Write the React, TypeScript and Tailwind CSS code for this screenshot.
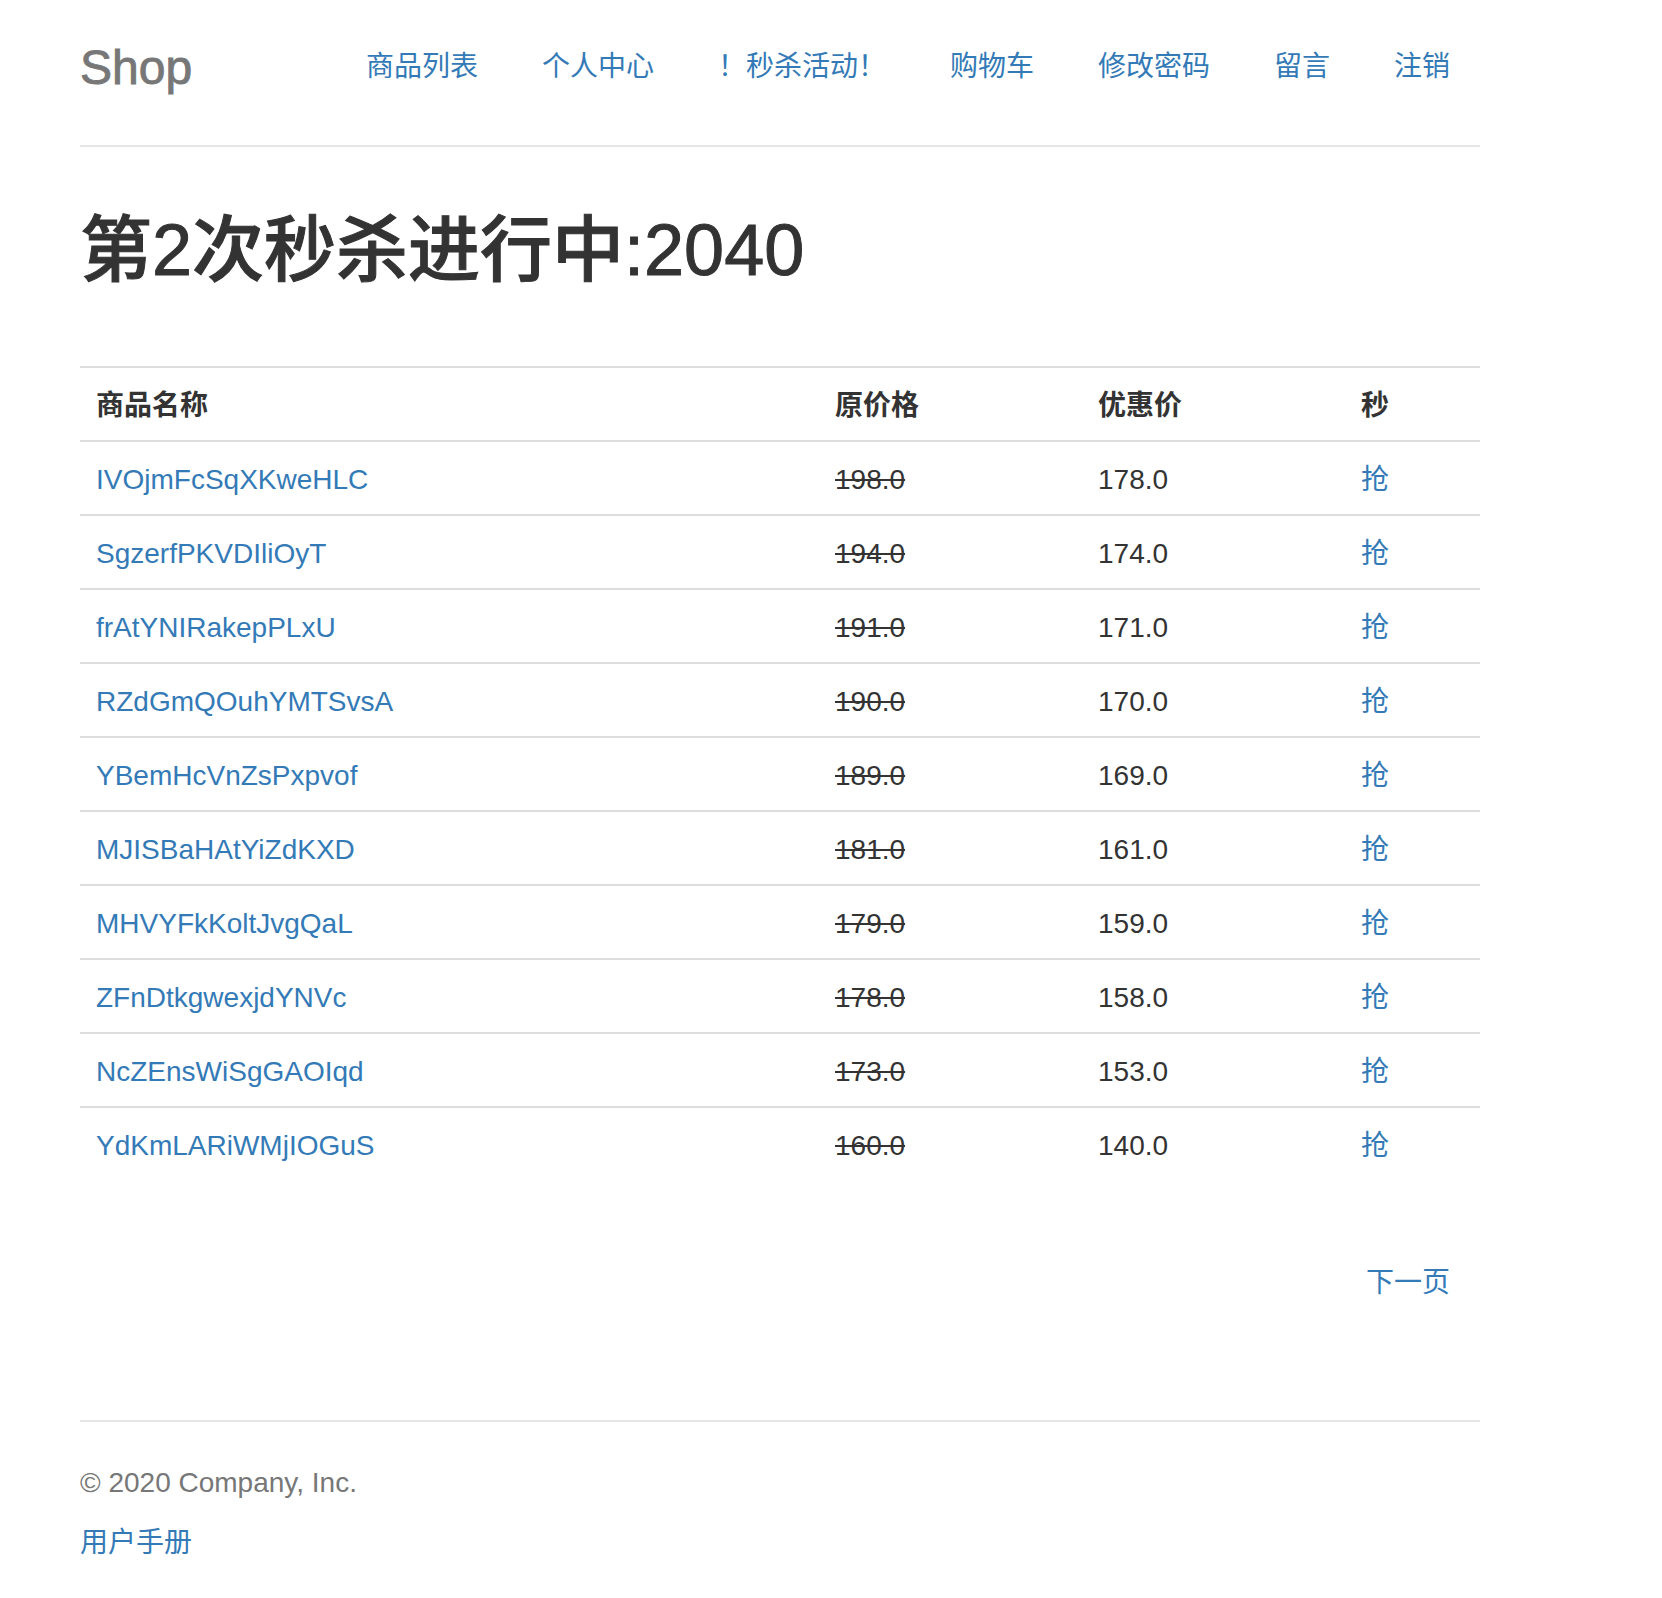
import React from "react";

const nav = ["商品列表", "个人中心", "！秒杀活动！", "购物车", "修改密码", "留言", "注销"];

const rows: [string, string, string][] = [
  ["IVOjmFcSqXKweHLC", "198.0", "178.0"],
  ["SgzerfPKVDIliOyT", "194.0", "174.0"],
  ["frAtYNIRakepPLxU", "191.0", "171.0"],
  ["RZdGmQOuhYMTSvsA", "190.0", "170.0"],
  ["YBemHcVnZsPxpvof", "189.0", "169.0"],
  ["MJISBaHAtYiZdKXD", "181.0", "161.0"],
  ["MHVYFkKoltJvgQaL", "179.0", "159.0"],
  ["ZFnDtkgwexjdYNVc", "178.0", "158.0"],
  ["NcZEnsWiSgGAOIqd", "173.0", "153.0"],
  ["YdKmLARiWMjIOGuS", "160.0", "140.0"],
];

export default function App() {
  const cell = "border-t-2 border-[#ddd] px-[16px] pt-[18px] pb-[14px] leading-[40px] text-left align-top";
  return (
    <div className="min-h-screen bg-white text-[#333] text-[28px] leading-[40px] font-['Liberation_Sans','Noto_Sans_CJK_SC',sans-serif]">
      <div className="ml-[80px] w-[1400px] pt-[25px]">
        <header className="flex justify-between items-start pb-[40px] border-b-2 border-[#e5e5e5]">
          <h3 className="h-[80px] pt-[5px] text-[48px] leading-[75px] text-[#777] font-medium [-webkit-text-stroke:0.9px_#777]">Shop</h3>
          <nav className="flex gap-[4px]">
            {nav.map((t) => (
              <a key={t} href="#" className="block px-[30px] pt-[22px] pb-[18px] leading-[40px] text-[#337ab7]">
                {t}
              </a>
            ))}
          </nav>
        </header>

        <h1 className="mt-[63px] text-[72px] leading-[80px] font-medium text-[#333] [-webkit-text-stroke:1px_#333]">第2次秒杀进行中:2040</h1>

        <table className="mt-[76px] w-[1400px] border-collapse">
          <tbody>
            <tr>
              <th className={cell + " w-[739px] font-bold"}>商品名称</th>
              <th className={cell + " w-[263px] font-bold"}>原价格</th>
              <th className={cell + " w-[263px] font-bold"}>优惠价</th>
              <th className={cell + " w-[135px] font-bold"}>秒</th>
            </tr>
            {rows.map(([name, orig, price]) => (
              <tr key={name}>
                <td className={cell}>
                  <a href="#" className="text-[#337ab7]">{name}</a>
                </td>
                <td className={cell}>
                  <del>{orig}</del>
                </td>
                <td className={cell}>{price}</td>
                <td className={cell}>
                  <a href="#" className="text-[#337ab7]">抢</a>
                </td>
              </tr>
            ))}
          </tbody>
        </table>

        <div className="flex justify-end pt-[83px]">
          <a href="#" className="px-[30px] leading-[40px] text-[#337ab7]">下一页</a>
        </div>

        <footer className="mt-[117px] border-t-2 border-[#e5e5e5] pt-[41px] text-[#777]">
          <p className="mb-[20px]">© 2020 Company, Inc.</p>
          <p className="pb-[33px]">
            <a href="#" className="text-[#337ab7]">用户手册</a>
          </p>
        </footer>
      </div>
    </div>
  );
}
